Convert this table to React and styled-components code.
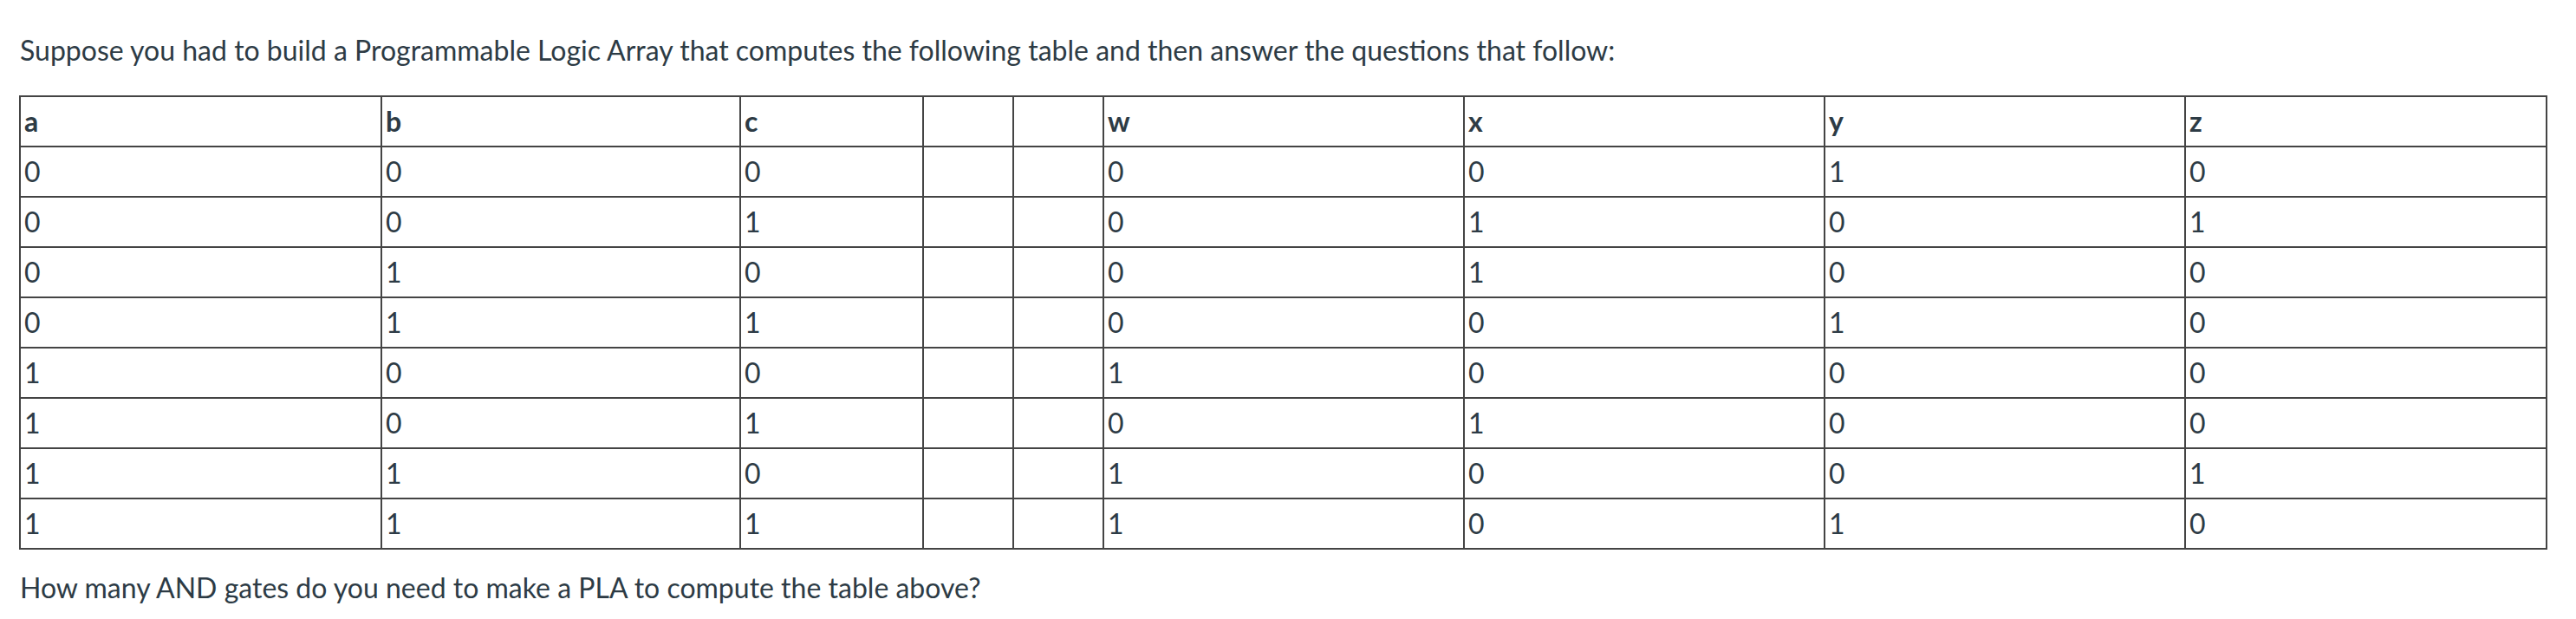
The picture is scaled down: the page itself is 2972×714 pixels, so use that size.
import React from "react";
import styled, { createGlobalStyle } from "styled-components";

const Global = createGlobalStyle`
  html, body { margin: 0; padding: 0; background: #ffffff; }
  body { font-family: Lato, "Noto Sans", sans-serif; color: #2d3b45; }
`;

const Page = styled.div`
  padding: 34px 35px 0 22px;
`;

const Text = styled.p`
  margin: 0;
  font-size: 32px;
  line-height: 48px;
  font-weight: 400;
  color: #2d3b45;
  padding-left: 1px;
`;

const Title = styled(Text)`
  margin-bottom: 28px;
`;

const Question = styled(Text)`
  margin-top: 20px;
`;

const Table = styled.table`
  border-collapse: collapse;
  table-layout: fixed;
  width: 2915px;
  border: 2px solid #444;
`;

const Cell = styled.td`
  border: 2px solid #444;
  padding: 5px 4px 5px 4px;
  height: 46px;
  font-size: 32px;
  line-height: 46px;
  text-align: left;
  vertical-align: middle;
  font-weight: ${(p) => (p.$head ? 700 : 400)};
  color: #2d3b45;
  box-sizing: content-box;
`;

const widths = [417, 414, 211, 104, 104, 416, 416, 416, 417];
const head = ["a", "b", "c", "", "", "w", "x", "y", "z"];
const rows = [
  ["0", "0", "0", "", "", "0", "0", "1", "0"],
  ["0", "0", "1", "", "", "0", "1", "0", "1"],
  ["0", "1", "0", "", "", "0", "1", "0", "0"],
  ["0", "1", "1", "", "", "0", "0", "1", "0"],
  ["1", "0", "0", "", "", "1", "0", "0", "0"],
  ["1", "0", "1", "", "", "0", "1", "0", "0"],
  ["1", "1", "0", "", "", "1", "0", "0", "1"],
  ["1", "1", "1", "", "", "1", "0", "1", "0"],
];

export default function App() {
  return (
    <>
      <Global />
      <Page>
        <Title>
          Suppose you had to build a Programmable Logic Array that computes the following table and then answer the questions that follow:
        </Title>
        <Table>
          <colgroup>
            {widths.map((w, i) => (
              <col key={i} style={{ width: w }} />
            ))}
          </colgroup>
          <tbody>
            <tr>
              {head.map((h, i) => (
                <Cell key={i} $head>
                  {h}
                </Cell>
              ))}
            </tr>
            {rows.map((r, ri) => (
              <tr key={ri}>
                {r.map((v, ci) => (
                  <Cell key={ci}>{v}</Cell>
                ))}
              </tr>
            ))}
          </tbody>
        </Table>
        <Question>How many AND gates do you need to make a PLA to compute the table above?</Question>
      </Page>
    </>
  );
}
